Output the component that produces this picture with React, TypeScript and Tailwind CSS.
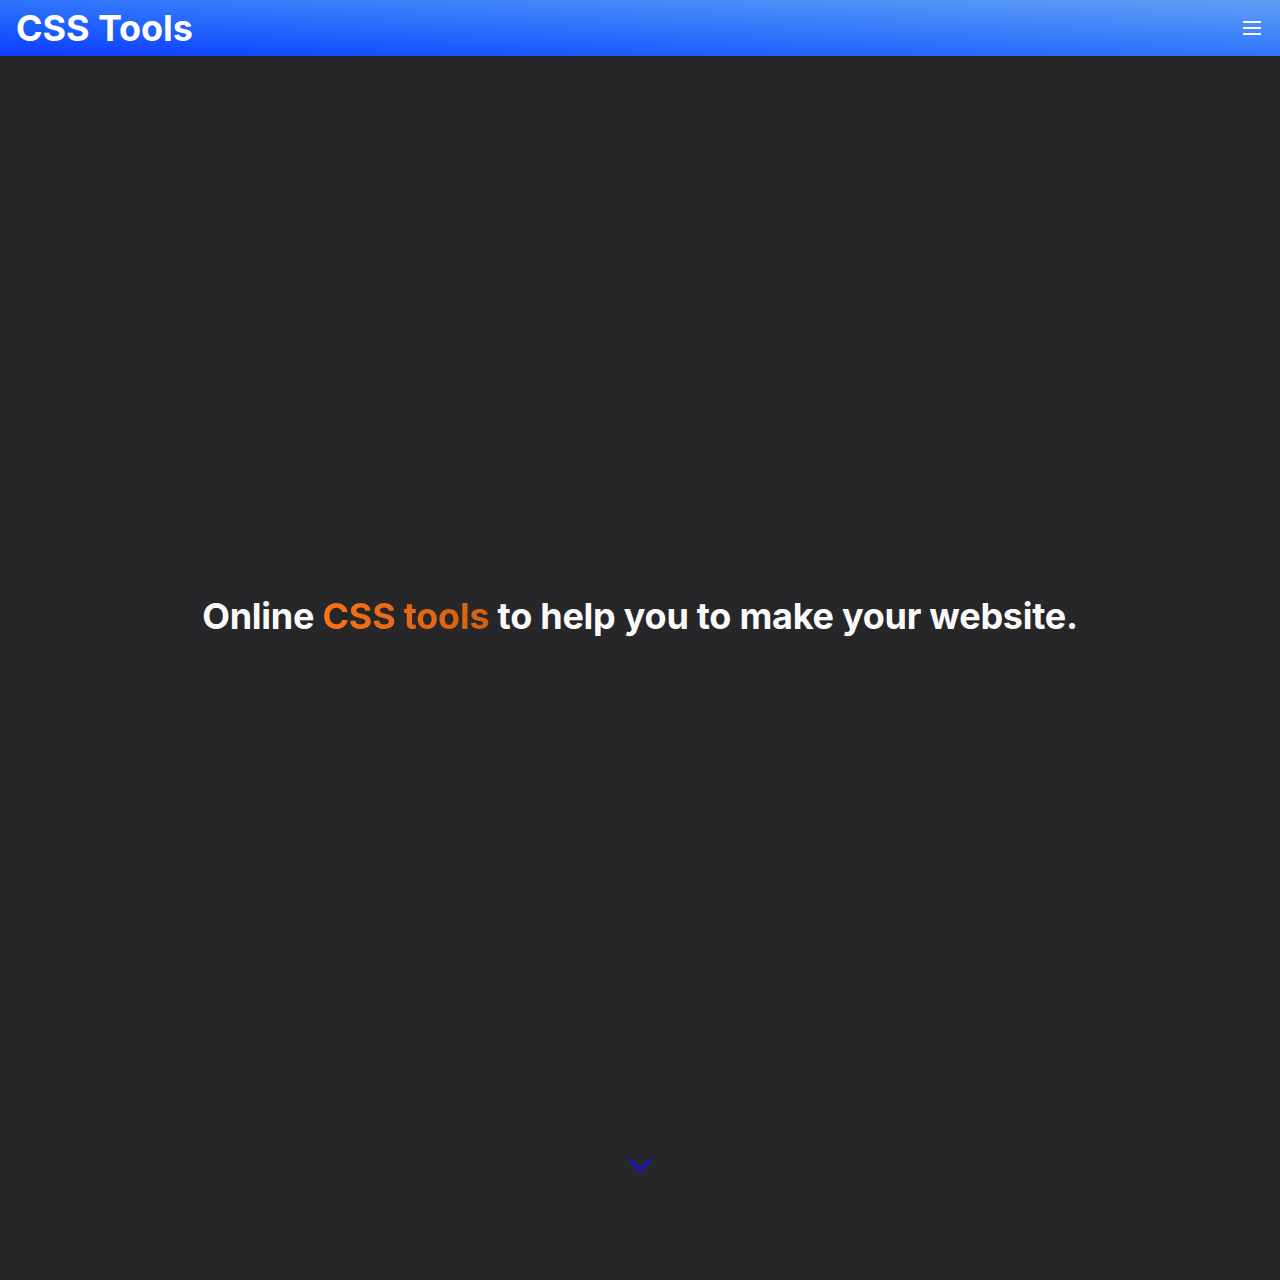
export default function App() {
  return (
    <div className="min-h-screen bg-[#27272a] font-['Inter','Liberation_Sans',sans-serif]">
      <header className="h-14 flex items-center justify-between pl-4 pr-[19px] bg-gradient-to-tr from-[#1238ff] to-[#5f9ff5]">
        <h1 className="text-4xl font-bold text-white tracking-[-0.1px]">CSS Tools</h1>
        <button className="p-0">
          <svg width="18" height="16" viewBox="0 0 18 16">
            <rect x="0" y="1" width="18" height="2" fill="#fff" />
            <rect x="0" y="7" width="18" height="2" fill="#fff" />
            <rect x="0" y="13" width="18" height="2" fill="#fff" />
          </svg>
        </button>
      </header>

      <main className="flex flex-col items-center">
        {/* Hero */}
        <div className="h-[1096px] pt-[24px] w-full flex items-center justify-center">
          <h2 className="text-4xl font-bold text-[#fafafa] tracking-[-0.26px]">
            Online{' '}
            <span className="bg-gradient-to-r from-[#f97316] to-[#d4600f] bg-clip-text text-transparent">
              CSS tools
            </span>{' '}
            to help you to make your website.
          </h2>
        </div>

        {/* scroll hint */}
        <svg className="mt-[6px]" width="24" height="14" viewBox="0 0 24 14">
          <polyline points="1.5,1.5 12,12 22.5,1.5" fill="none" stroke="#1414e6" strokeWidth="2.5" />
        </svg>
      </main>
    </div>
  )
}
